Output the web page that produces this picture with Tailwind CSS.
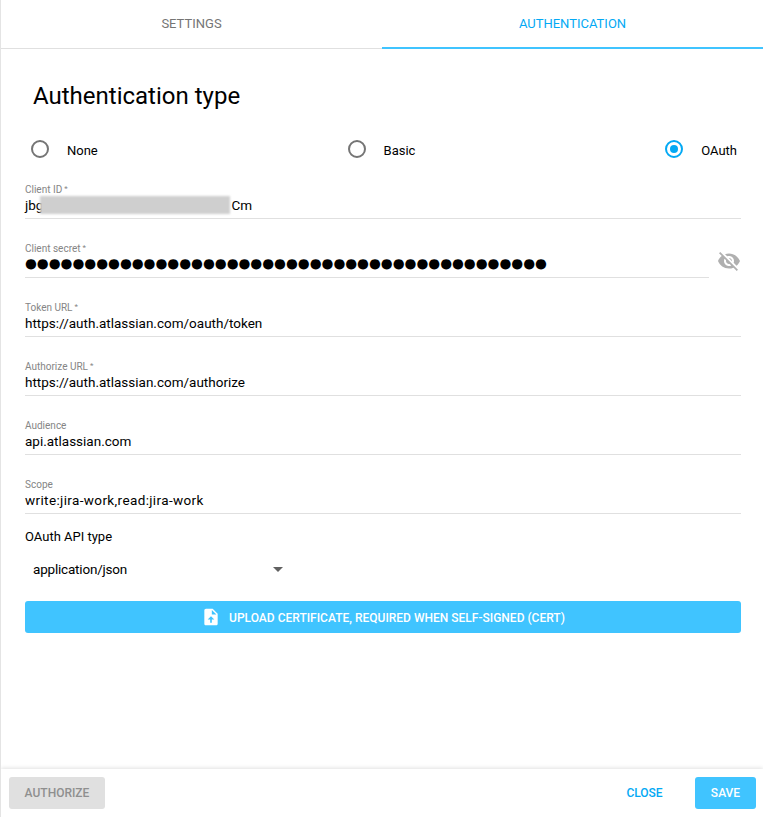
<!DOCTYPE html>
<html lang="en">
<head>
  <meta charset="UTF-8" />
  <title>Authentication</title>
  <script src="https://cdn.jsdelivr.net/npm/@tailwindcss/browser@4"></script>
</head>
<body class="bg-white font-['Roboto',sans-serif] text-black">
  <div class="flex h-[817px] w-[763px] flex-col overflow-hidden border-l border-[#e4e4e4]">
    <!-- tabs -->
    <div class="flex h-[49px] shrink-0 border-b border-[#e0e0e0] text-[13px]">
      <div class="flex h-[48px] w-[381px] items-center justify-center text-[#757575]">SETTINGS</div>
      <div class="flex h-[49px] w-[381px] items-center justify-center border-b-[2px] border-[#40c4ff] text-[#03a9f4]">AUTHENTICATION</div>
    </div>

    <div class="flex-1 pl-[24px] pr-[22px]">
      <h1 class="ml-[8px] mt-[30px] text-[24px] leading-[34px]">Authentication type</h1>

      <!-- radios -->
      <div class="mt-[24px] flex h-[24px] items-center justify-between pl-[6px] pr-[4px] text-[13px]">
        <label class="flex items-center gap-[18px]">
          <span class="size-[18px] rounded-full border-2 border-[#757575]"></span>
          <span class="pt-[4px]">None</span>
        </label>
        <label class="flex items-center gap-[18px]">
          <span class="size-[18px] rounded-full border-2 border-[#757575]"></span>
          <span class="pt-[4px]">Basic</span>
        </label>
        <label class="flex items-center gap-[18px]">
          <span class="flex size-[18px] items-center justify-center rounded-full border-2 border-[#03a9f4]">
            <span class="size-[8px] rounded-full bg-[#03a9f4]"></span>
          </span>
          <span class="pt-[4px]">OAuth</span>
        </label>
      </div>

      <!-- fields -->
      <div class="mt-[17px] flex h-[41px] flex-col border-b border-[#e0e0e0]">
        <label class="pt-[6px] text-[10px] leading-[11px] text-[#858585]">Client ID<sup class="top-[-2px] ml-[2px] text-[8px]">*</sup></label>
        <div class="relative text-[13.5px] leading-[20px]">jbg<span class="inline-block w-[188px]"></span>Cm
          <span class="absolute left-[15px] top-[1px] h-[18px] w-[190px] bg-[#cfcfcf] blur-[1px]"></span>
        </div>
      </div>

      <div class="mt-[18px] flex">
        <div class="flex h-[41px] w-[684px] flex-col border-b border-[#e0e0e0]">
          <label class="pt-[6px] text-[10px] leading-[11px] text-[#858585]">Client secret<sup class="top-[-2px] ml-[2px] text-[8px]">*</sup></label>
          <div class="font-['DejaVu_Sans',sans-serif] text-[13.6px] leading-[18px]">●●●●●●●●●●●●●●●●●●●●●●●●●●●●●●●●●●●●●●●●●●●●</div>
        </div>
        <svg class="ml-[8px] mt-[12px] size-[24px]" viewBox="0 0 24 24" fill="#b0b0b0">
          <path d="M12 7c2.76 0 5 2.24 5 5 0 .65-.13 1.26-.36 1.83l2.92 2.92c1.51-1.26 2.7-2.89 3.43-4.75-1.73-4.39-6-7.5-11-7.5-1.4 0-2.74.25-3.98.7l2.16 2.16C10.74 7.13 11.35 7 12 7zM2 4.27l2.28 2.28.46.46C3.08 8.3 1.78 10.02 1 12c1.73 4.39 6 7.5 11 7.5 1.55 0 3.03-.3 4.38-.84l.42.42L19.73 22 21 20.73 3.27 3 2 4.27zM7.53 9.8l1.55 1.55c-.05.21-.08.43-.08.65 0 1.66 1.34 3 3 3 .22 0 .44-.03.65-.08l1.55 1.55c-.67.33-1.41.53-2.2.53-2.76 0-5-2.24-5-5 0-.79.2-1.53.53-2.2zm4.31-.78l3.15 3.15.02-.16c0-1.66-1.34-3-3-3l-.17.01z"/>
        </svg>
      </div>

      <div class="mt-[18px] flex h-[41px] flex-col border-b border-[#e0e0e0]">
        <label class="pt-[6px] text-[10px] leading-[11px] text-[#858585]">Token URL<sup class="top-[-2px] ml-[2px] text-[8px]">*</sup></label>
        <div class="text-[13.5px] leading-[20px]">https://auth.atlassian.com/oauth/token</div>
      </div>
      <div class="mt-[18px] flex h-[41px] flex-col border-b border-[#e0e0e0]">
        <label class="pt-[6px] text-[10px] leading-[11px] text-[#858585]">Authorize URL<sup class="top-[-2px] ml-[2px] text-[8px]">*</sup></label>
        <div class="text-[13.5px] leading-[20px]">https://auth.atlassian.com/authorize</div>
      </div>
      <div class="mt-[18px] flex h-[41px] flex-col border-b border-[#e0e0e0]">
        <label class="pt-[6px] text-[10px] leading-[11px] text-[#858585]">Audience</label>
        <div class="text-[13.5px] leading-[20px]">api.atlassian.com</div>
      </div>
      <div class="mt-[18px] flex h-[41px] flex-col border-b border-[#e0e0e0]">
        <label class="pt-[6px] text-[10px] leading-[11px] text-[#858585]">Scope</label>
        <div class="text-[13.5px] leading-[20px] tracking-[0.37px]">write:jira-work,read:jira-work</div>
      </div>

      <div class="mt-[14px] text-[13px] leading-[18px]">OAuth API type</div>
      <div class="mt-[13px] flex h-[20px] w-[258px] items-center justify-between pl-[8px] text-[13.5px] tracking-[-0.2px]">
        <span>application/json</span>
        <span class="h-0 w-0 border-x-[5px] border-t-[5px] border-x-transparent border-t-[#616161]"></span>
      </div>

      <button class="mt-[22px] flex h-[32px] w-full items-center justify-center gap-[8px] rounded-[3px] bg-[#40c4ff] pt-[1px] text-[12px] font-medium text-white">
        <svg class="mb-[1px] size-[20px]" viewBox="0 0 24 24" fill="#fff">
          <path d="M14 2H6c-1.1 0-2 .9-2 2v16c0 1.1.9 2 2 2h12c1.1 0 2-.9 2-2V8l-6-6zm-1 7V3.5L18.5 9H13zm-1 2l4 4h-3v4h-2v-4H8l4-4z"/>
        </svg>
        UPLOAD CERTIFICATE, REQUIRED WHEN SELF-SIGNED (CERT)
      </button>
    </div>

    <!-- footer -->
    <div class="flex h-[48px] shrink-0 items-center justify-between pb-[1px] pl-[8px] pr-[7px] shadow-[0_-1px_4px_rgba(0,0,0,0.12)]">
      <button class="h-[32px] w-[96px] rounded-[3px] bg-[#e0e0e0] text-[12px] font-medium text-[#8f8f8f]">AUTHORIZE</button>
      <div class="flex items-center gap-[27px]">
        <button class="h-[32px] w-[47px] text-[12px] font-medium text-[#03a9f4]">CLOSE</button>
        <button class="h-[32px] w-[61px] rounded-[3px] bg-[#40c4ff] text-[12px] font-medium text-white">SAVE</button>
      </div>
    </div>
  </div>
</body>
</html>
